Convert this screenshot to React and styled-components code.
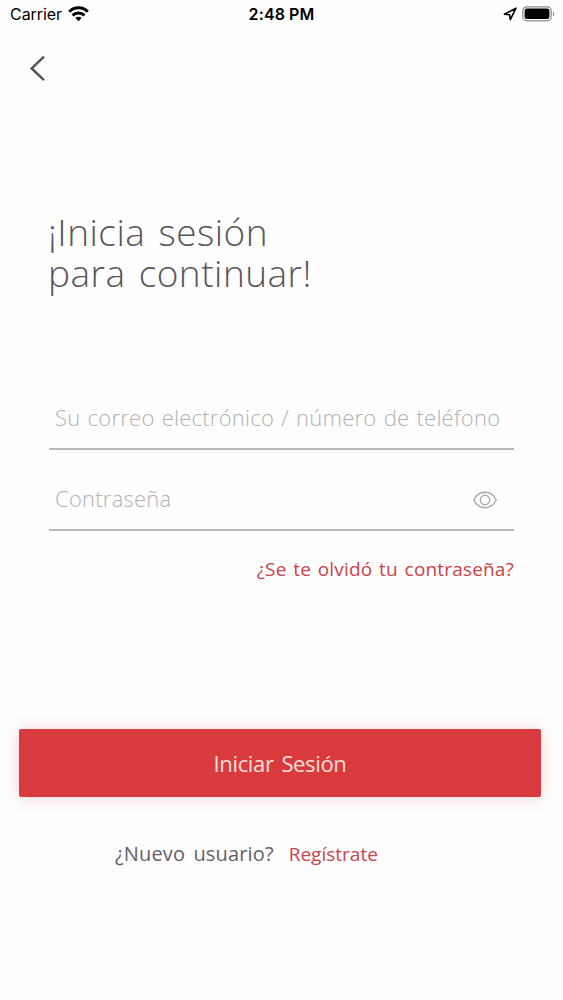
import React from 'react'
import styled, { createGlobalStyle } from 'styled-components'

const GlobalStyle = createGlobalStyle`
  body {
    margin: 0;
    background-color: #fefefe;
  }

  * {
    box-sizing: border-box;
  }
`

const Screen = styled.div`
  display: flex;
  flex-direction: column;
  width: 563px;
  height: 1000px;
  overflow: hidden;
  background-color: #fefefe;
  color: #58555a;
  font-family: 'Open Sans', 'Noto Sans', sans-serif;
  font-weight: 300;
`

const StatusBar = styled.header`
  display: grid;
  grid-template-columns: 1fr auto 1fr;
  align-items: center;
  height: 28px;
  padding: 0 8px 0 10px;
  color: #000;
  font-family: Inter, sans-serif;
  font-size: 16px;
  font-weight: 400;
`

const Carrier = styled.div`
  display: flex;
  align-items: center;
  gap: 6px;
  letter-spacing: -0.05px;
`

const Time = styled.div`
  margin-right: 2px;
  font-weight: 600;
  letter-spacing: 0.1px;
`

const Indicators = styled.div`
  display: flex;
  align-items: center;
  justify-content: flex-end;
  gap: 5px;
`

const BackButton = styled.button`
  display: flex;
  width: 17px;
  height: 27px;
  margin: 27px 0 0 29px;
  padding: 0;
  border: 0;
  background: none;
  color: #58555a;
`

const Title = styled.h1`
  margin: 129px 0 0 48px;
  font-size: 37px;
  font-weight: 300;
  line-height: 41px;
  letter-spacing: 0.48px;
  word-spacing: 3px;
  white-space: nowrap;
`

const Form = styled.form`
  display: flex;
  flex-direction: column;
  margin: 93px 49px 0;
`

const Field = styled.label`
  display: flex;
  align-items: center;
  height: 64px;
  padding: 0 0 0 6px;
  border-bottom: 2px solid #b9b7ba;

  & + & {
    margin-top: 17px;
  }
`

const Input = styled.input`
  flex: 1;
  min-width: 0;
  padding: 0;
  border: 0;
  outline: 0;
  background: none;
  font: inherit;
  font-size: 22px;
  letter-spacing: 0.24px;
  word-spacing: 1.2px;

  &::placeholder {
    color: #b3b0b5;
    opacity: 1;
  }
`

const Link = styled.a`
  color: #cb4248;
  font-size: 19px;
  font-weight: 400;
  letter-spacing: ${props => props.$spacing || 0};
  word-spacing: 1.6px;
  white-space: nowrap;
`

const Forgot = styled.div`
  display: flex;
  justify-content: flex-end;
  margin-top: 24px;
  line-height: 28px;
`

const SubmitButton = styled.button`
  height: 68px;
  margin: 146px 22px 0 19px;
  padding: 0 0 1px;
  border: 0;
  border-radius: 2px;
  background-color: #d93a3e;
  box-shadow: 0 1px 14px rgba(217, 58, 62, 0.24);
  color: #ffe0d6;
  font: inherit;
  font-size: 22px;
  font-weight: 400;
  letter-spacing: -0.36px;
  word-spacing: 2.5px;
`

const Footer = styled.footer`
  display: flex;
  align-items: baseline;
  gap: 15px;
  margin: 43px 0 0 115px;
  font-size: 20px;
  font-weight: 400;
  line-height: 28px;
`

const Question = styled.span`
  color: #636065;
  letter-spacing: 0.15px;
  word-spacing: 3px;
`

const EyeSvg = styled.svg`
  flex: none;
  margin: 4px 17px 0 0;
`

const WifiIcon = () => (
  <svg width="21" height="16" viewBox="0 0 21 16" fill="none" stroke="currentColor" strokeWidth="3">
    <path d="M1.2 5.7a13.2 13.2 0 0 1 18.6 0M4.5 9.4a8.5 8.5 0 0 1 12 0" />
    <path d="M10.5 15.2l-3.1-3.1a4.4 4.4 0 0 1 6.2 0z" fill="currentColor" stroke="none" />
  </svg>
)

const LocationIcon = () => (
  <svg width="14" height="14" viewBox="0 0 14 14" fill="none" stroke="currentColor" strokeWidth="1.6" strokeLinejoin="round">
    <path d="M13 1.2L1.4 7.2l5.2.5.7 5z" />
  </svg>
)

const BatteryIcon = () => (
  <svg width="33" height="16" viewBox="0 0 33 16">
    <rect x="0.8" y="0.8" width="28.4" height="14" rx="4" fill="none" stroke="#8c8c8c" strokeWidth="1.2" />
    <rect x="2.6" y="2.6" width="24.8" height="10.4" rx="2.2" fill="#000" />
    <path d="M31 5.4c1.8.8 1.8 4 0 4.8z" fill="#8c8c8c" />
  </svg>
)

const ChevronIcon = () => (
  <svg width="17" height="27" viewBox="0 0 17 27" fill="none" stroke="currentColor" strokeWidth="2.5">
    <path d="M15 1.7L2.7 13.4 15 25.1" />
  </svg>
)

const EyeIcon = () => (
  <EyeSvg width="24" height="18" viewBox="0 0 24 18" fill="none" stroke="#aaa6ad" strokeWidth="1.4">
    <path d="M.8 9C3.2 4 7.2 1.3 12 1.3S20.8 4 23.2 9C20.8 14 16.8 16.7 12 16.7S3.2 14 .8 9z" />
    <circle cx="12" cy="9" r="4.7" />
  </EyeSvg>
)

const App = () => (
  <>
    <GlobalStyle />
    <Screen>
      <StatusBar>
        <Carrier>
          Carrier
          <WifiIcon />
        </Carrier>
        <Time>2:48 PM</Time>
        <Indicators>
          <LocationIcon />
          <BatteryIcon />
        </Indicators>
      </StatusBar>
      <BackButton type="button" aria-label="Volver">
        <ChevronIcon />
      </BackButton>
      <Title>
        ¡Inicia sesión
        <br />
        para continuar!
      </Title>
      <Form>
        <Field>
          <Input placeholder="Su correo electrónico / número de teléfono" />
        </Field>
        <Field>
          <Input type="password" placeholder="Contraseña" />
          <EyeIcon />
        </Field>
        <Forgot>
          <Link $spacing="0.18px">¿Se te olvidó tu contraseña?</Link>
        </Forgot>
      </Form>
      <SubmitButton type="button">Iniciar Sesión</SubmitButton>
      <Footer>
        <Question>¿Nuevo usuario?</Question>
        <Link>Regístrate</Link>
      </Footer>
    </Screen>
  </>
)

export default App
